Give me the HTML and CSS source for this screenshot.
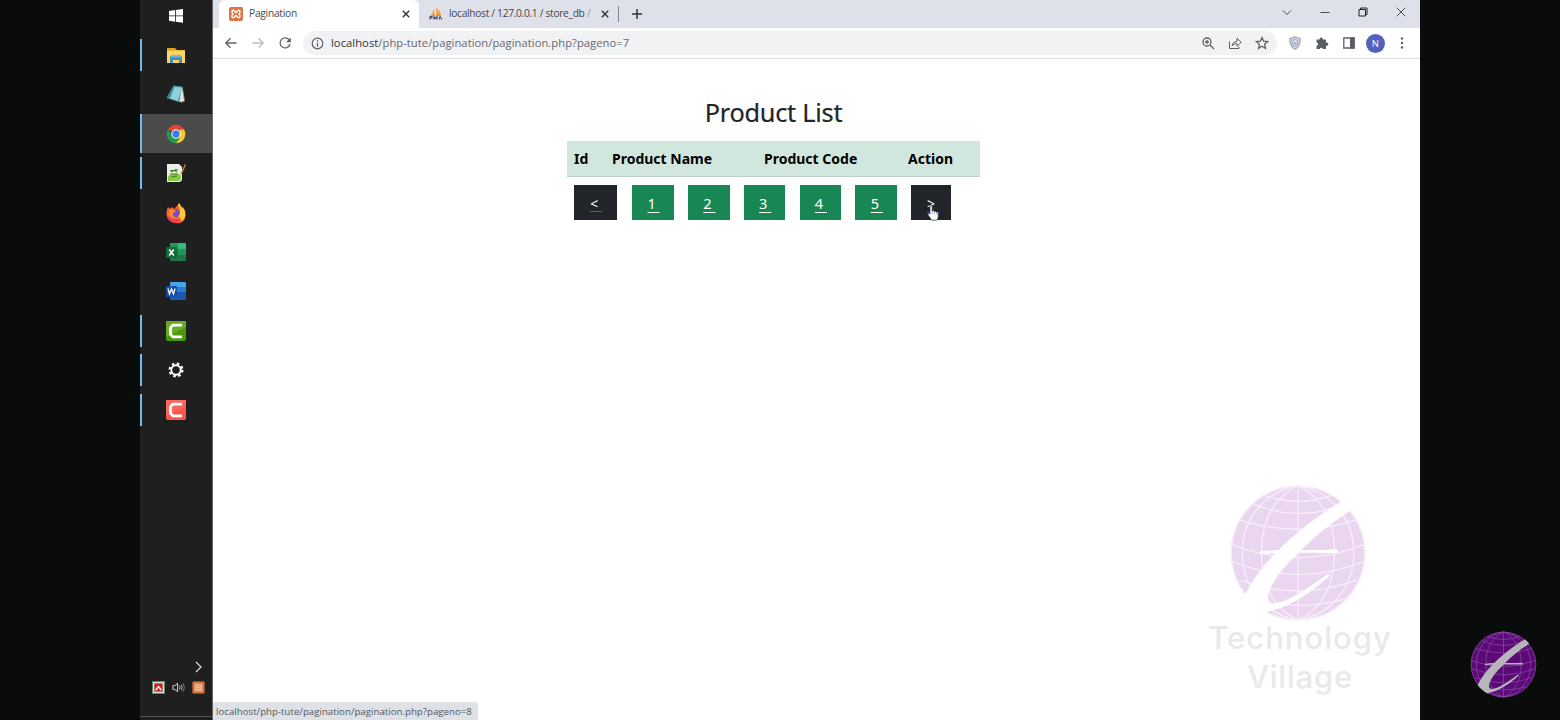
FILE: index.html
```html
<!DOCTYPE html>
<html lang="en">
<head>
<meta charset="utf-8">
<title>Pagination</title>
<link rel="stylesheet" href="styles.css">
</head>
<body>
<svg class="defs" aria-hidden="true">
  <clipPath id="disc"><circle cx="308" cy="234" r="206"/></clipPath>
  <symbol id="globe" viewBox="100 26 416 416">
    <circle class="ball" cx="308" cy="234" r="203"/>
    <g class="grid">
      <path d="M308 31V437M308 31C230 70 198 140 198 234S230 398 308 437M308 31C386 70 418 140 418 234S386 398 308 437M308 31C190 55 140 145 140 234S190 413 308 437M308 31C426 55 476 145 476 234S426 413 308 437"/>
      <path d="M205 60Q308 96 410 60M132 135Q308 190 484 135M107 208Q308 288 509 208M112 260Q308 338 505 260M130 315Q308 382 486 315M165 372Q308 412 451 372M170 85Q308 145 446 85"/>
      <circle cx="308" cy="234" r="201"/>
    </g>
    <g class="mark" clip-path="url(#disc)">
      <path d="M440 78C330 145 205 245 150 357L120 400L213 445V411C278 400 342 358 403 303Q407 297 398 297C350 330 292 374 245 385Q211 393 220 352C235 314 265 274 308 236C350 190 405 145 468 105L475 60Z"/>
      <path d="M196 229C260 222 350 228 425 223Q433 229 425 234C350 234 260 231 196 238Q190 233 196 229Z"/>
    </g>
  </symbol>
  <symbol id="xampp" viewBox="0 0 14 14">
    <rect width="14" height="14" rx="2" fill="#dc7540"/>
    <path d="M4.800 3.400C2.600 2.800 2.400 5.800 4 7C2.400 8.200 2.600 11.200 4.800 10.600C6.200 10.200 5.800 8.400 7 8.400S7.800 10.200 9.200 10.600C11.400 11.200 11.600 8.200 10 7C11.600 5.800 11.400 2.800 9.200 3.400C7.800 3.800 8.200 5.600 7 5.600S6.200 3.800 4.800 3.400Z" fill="none" stroke="#fff" stroke-width="1.400"/>
  </symbol>
</svg>
<div class="desktop">
  <nav class="taskbar">
    <div class="apps">
      <div class="app"><svg viewBox="0 0 22 22"><path fill="#fff" d="M4 6l6-.9v5.4H4zM10.800 5l7.200-1v6.500h-7.200zM4 11.300h6v5.400l-6-.9zM10.800 11.300H18v6.500l-7.200-1z"/></svg></div>
      <div class="app open"><svg viewBox="0 0 22 22"><path fill="#dda01c" d="M2 4h8l2 2h8v5H2z"/><path fill="#fcd462" d="M2 6.500h18V19H2z"/><path fill="#4090bb" d="M5 19v-5.500q0-2 2-2h8q2 0 2 2V19h-3v-3H8v3z"/><path fill="#69b4d4" d="M6 12h10v1.500H6z"/></svg></div>
      <div class="app"><svg viewBox="0 0 22 22"><path fill="#a6895c" d="M17.500 3l2.500 15-4 2z"/><path fill="#438f9f" d="M8.500 2.500l9 1-4 15.500L1.500 15z"/><path fill="#8fd0da" d="M9.500 4l7.500.5-4 13.500-8-2.500z"/><path fill="#d5edef" d="M17 4l2 14-5 1z"/></svg></div>
      <div class="app open active"><svg viewBox="0 0 22 22"><path fill="#e54435" d="M11 11L3 6.300A9.300 9.300 0 0 1 19.100 6.400H11z"/><path fill="#fbc832" d="M19.100 6.400A9.300 9.300 0 0 1 11 20.300L15 13.300 14.500 6.400z"/><path fill="#279b4c" d="M11 20.300A9.300 9.300 0 0 1 3 6.300L7 13.300l4 2h3.800z"/><circle cx="11" cy="11" r="4.700" fill="#fff"/><circle cx="11" cy="11" r="3.700" fill="#397de8"/></svg></div>
      <div class="app open"><svg viewBox="0 0 22 22"><path fill="#edf0e7" d="M2 2h12l3 3v13l-2 2H2z"/><path fill="#8bcb41" d="M3 14q6-4 13-1v4l-2 2H3z"/><path d="M5 8.500h3m2-1 3 .5M5 12h8m-7 3 6-1M6 10q3-3 6 0" stroke="#3d7e28" stroke-width="1.200" fill="none"/><path d="M20.500 2.500L16 12" stroke="#c78a2c" stroke-width="1.500"/></svg></div>
      <div class="app"><svg viewBox="0 0 22 22"><path fill="#ff642f" d="M3 5l2 2 2-2 2 2 4-4 1-2 3 5 3 2q2 9-3 12T5 19Q-1 14 3 5z"/><path fill="#ffc936" d="M13 3l1-2 3 5 1-1q5 9-1 14l-4-6q4-5 0-10z"/><path fill="#f53a57" d="M2 11q2 7 9 6l5 1q-5 5-11 1-4-3-3-8z"/><circle cx="10.500" cy="11" r="4.300" fill="#784dc4"/><path fill="#ff8a2a" d="M4 8q5-2 7 1l-3 2q-1 4 3 4-5 2-7-2z"/></svg></div>
      <div class="app"><svg viewBox="0 0 22 22"><rect x="5" y="2" width="16" height="18" rx="1" fill="#20764a"/><path fill="#34bd79" d="M13 2h7l1 1v5h-8z"/><path fill="#23945a" d="M5 2h8v6H5zM13 8h8v6h-8z"/><rect x="1" y="6" width="11" height="11" rx="1" fill="#14693d"/><path d="M4.200 8.500l4.600 6M8.800 8.500l-4.600 6" stroke="#fff" stroke-width="1.600"/></svg></div>
      <div class="app"><svg viewBox="0 0 22 22"><rect x="5" y="2" width="16" height="18" rx="1" fill="#1e57b0"/><path fill="#45a5eb" d="M6 2h14l1 1v4H5V3z"/><path fill="#2b7dd4" d="M5 7h16v5H5z"/><rect x="1" y="6" width="11" height="11" rx="1" fill="#1c4ca1"/><path d="M3 8.500l1.500 5.500 2-5 2 5L10 8.500" fill="none" stroke="#fff" stroke-width="1.300"/></svg></div>
      <div class="app open"><svg viewBox="0 0 22 22"><rect x="1" y="1" width="20" height="20" rx="2" fill="#4b980d"/><path fill="#65ac24" d="M1 1h20v6L1 17z"/><path d="M17 5.200H8L5.500 7.500v7L8 16.800h9" fill="none" stroke="#fff" stroke-width="2.800"/></svg></div>
      <div class="app open"><svg viewBox="0 0 22 22"><circle cx="11" cy="11" r="4.700" fill="none" stroke="#fff" stroke-width="1.900"/><circle cx="11" cy="11" r="6.300" fill="none" stroke="#fff" stroke-width="2.400" stroke-dasharray="2.500 2.448"/></svg></div>
      <div class="app open"><svg viewBox="0 0 22 22"><rect x="1" y="1" width="20" height="20" rx="2" fill="#f2594b"/><path fill="#f9695b" d="M1 1h20v6L1 17z"/><path d="M17 5.200H8L5.500 7.500v7L8 16.800h9" fill="none" stroke="#fff" stroke-width="2.800"/></svg></div>
    </div>
    <div class="tray">
      <svg class="more" viewBox="0 0 10 14"><path d="M2 2l5 5-5 5" fill="none" stroke="#ddd" stroke-width="1.200"/></svg>
      <div class="trayrow">
        <svg viewBox="0 0 14 14"><rect x=".5" y=".5" width="13" height="13" fill="#d9e4dc" stroke="#4b8b69"/><path fill="#c9222e" d="M2.500 2.500h9v9h-9z"/><path d="M4 10l3-4 3 4" stroke="#fff" stroke-width="1.500" fill="none"/></svg>
        <svg viewBox="0 0 14 14"><path d="M1 5h2l3-2.500v9L3 9H1z" fill="none" stroke="#ddd"/><path d="M8 5q1.400 2 0 4M10 4q2.200 3 0 6" stroke="#ccc" fill="none"/><path d="M12 2.500q3 4.500 0 9" stroke="#777" fill="none"/></svg>
        <svg viewBox="0 0 14 14"><rect x=".5" y=".5" width="13" height="13" rx="1" fill="#d7773f"/><rect x="3" y="3" width="8" height="8" fill="#edb48e"/><path d="M4.500 5.500h5M4.500 8.500h5" stroke="#e39a6c"/></svg>
      </div>
    </div>
  </nav>
  <main class="browser">
    <header class="tabs">
      <div class="tab current"><svg class="fav"><use href="#xampp"/></svg><span class="name">Pagination</span><svg class="close" viewBox="0 0 10 10"><path d="M1.800 1.800l6.400 6.400M8.200 1.800L1.800 8.200"/></svg></div>
      <div class="tab other"><svg class="fav" viewBox="0 0 14 14"><path fill="#f6a147" d="M1 9q3-3 4-7l1 7zM7 9q1-4 0-8 5 3 5 8z"/><path d="M1 12.500V9.500h2v1.500H1M5 12.500v-3l1.500 2L8 9.500v3M10 12.500l1-3 2 3" fill="none" stroke="#4b4764" stroke-width="1.100"/></svg><span class="name db">localhost / 127.0.0.1 / store_db <i>/</i></span><svg class="close" viewBox="0 0 10 10"><path d="M1.800 1.800l6.400 6.400M8.200 1.800L1.800 8.200"/></svg></div>
      <svg class="plus" viewBox="0 0 12 12"><path d="M6 1v10M1 6h10"/></svg>
      <div class="window">
        <svg viewBox="0 0 12 12"><path d="M2 4.500l4 4 4-4"/></svg>
        <svg viewBox="0 0 12 12"><path d="M1.500 6.500h9"/></svg>
        <svg viewBox="0 0 12 12"><path class="dark" d="M2 3.500h6.500V10H2zM3.500 3V2H10v6.500H9"/></svg>
        <svg viewBox="0 0 12 12"><path d="M1.700 1.700l8.600 8.600M10.300 1.700l-8.600 8.600"/></svg>
      </div>
    </header>
    <div class="toolbar">
      <div class="nav">
        <svg viewBox="0 0 14 14"><path d="M12.500 7H2M6.500 2.300L1.800 7l4.700 4.700"/></svg>
        <svg class="off" viewBox="0 0 14 14"><path d="M1.500 7H12M7.500 2.300L12.200 7l-4.700 4.700"/></svg>
        <svg viewBox="0 0 14 14"><path d="M11.500 4.500A5 5 0 1 0 12 8"/><path class="solid" d="M12.800 1.500v4.700H8.100z"/></svg>
      </div>
      <div class="omnibox">
        <svg class="info" viewBox="0 0 12 12"><circle cx="6" cy="6" r="4.900"/><path d="M6 5.400V9M6 3v1.300"/></svg>
        <span class="url"><b>localhost</b>/php-tute/pagination/pagination.php?pageno=7</span>
        <svg viewBox="0 0 14 14"><circle cx="6" cy="6" r="4"/><path d="M9 9l4 4M4 6h4M6 4v4"/></svg>
        <svg class="thin" viewBox="0 0 14 14"><path d="M1.500 5.500V12.500H11V10.500M4 9.700Q4.800 5.500 9 5.300V2.300L13.300 6.300 9 10.200V7.500Q6 7.500 4 9.700Z"/></svg>
        <svg viewBox="0 0 14 14"><path d="M7 1.500l1.600 3.700 4 .4-3 2.700.9 4L7 10.200l-3.500 2.100.9-4-3-2.700 4-.4z"/></svg>
      </div>
      <div class="ext">
        <svg viewBox="0 0 14 14"><path d="M7 .8l5.200 1.800q.5 7.400-5.200 10.800Q1.300 10 1.800 2.600z" fill="#d4d6df" stroke="#a9adba"/><circle cx="7" cy="6.600" r="2.900" fill="#eceef5" stroke="#a5adcc"/><path d="M5.500 6h3v2h-3z" fill="#a8afcb" stroke="none"/></svg>
        <svg viewBox="0 0 14 14"><path class="solid" d="M1.500 3.500h3.200a1.600 1.600 0 1 1 3.100 0H11v3.100a1.700 1.700 0 1 1 0 3.200V13H7.900a1.700 1.700 0 0 0-3.200 0H1.500V9.800a1.600 1.600 0 0 0 0-3.200z"/></svg>
        <svg viewBox="0 0 14 14"><path d="M1.800 2h10.400v10H1.800z"/><path class="solid" d="M8 1.500h4.500v11H8z"/></svg>
        <span class="avatar">N</span>
        <svg viewBox="0 0 14 14"><g class="solid"><circle cx="7" cy="2.500" r="1.200"/><circle cx="7" cy="7" r="1.200"/><circle cx="7" cy="11.500" r="1.200"/></g></svg>
      </div>
    </div>
    <section class="page">
      <h1>Product List</h1>
      <div class="table">
        <div class="thead"><span>Id</span><span>Product Name</span><span>Product Code</span><span>Action</span></div>
        <div class="pager">
          <a class="dark prev">&lt;&nbsp;</a><a>1&nbsp;</a><a>2&nbsp;</a><a>3&nbsp;</a><a>4&nbsp;</a><a>5&nbsp;</a><a class="dark next">&gt;&nbsp;</a>
        </div>
      </div>
    </section>
    <div class="status">localhost/php-tute/pagination/pagination.php?pageno=8</div>
    <svg class="cursor" viewBox="0 0 14 20"><path d="M4 11V3q1-2 2.200 0v5q1.500-1 2 .5 1.500-.8 2 .7 1.800-.6 2 1v3.500q0 2-1.500 3.500H5.500Q4.500 15 2 12q-.8-1.800 1-1.500z" fill="#fff" stroke="#333" stroke-width=".7"/><path d="M6.300 8v3M8.300 9v2.500M10.300 10v2" stroke="#777" stroke-width=".5"/></svg>
    <div class="watermark"><svg><use href="#globe"/></svg><span class="w1">Technology</span><span class="w2">Village</span></div>
  </main>
</div>
<svg class="badge"><use href="#globe"/></svg>
</body>
</html>
```
FILE: styles.css
```css
* { box-sizing: border-box; }
body { margin: 0; background: #090c0b; font-family: "Open Sans", "Noto Sans", sans-serif; overflow: hidden; }
svg { display: block; flex: none; }
.defs { position: absolute; width: 0; height: 0; }
.desktop { display: flex; width: 1280px; height: 720px; margin: 0 auto; }

.taskbar { width: 73px; background: #1f1f1f; border-right: 1px solid #666; border-bottom: 1px solid #1f1f1f; display: flex; flex-direction: column; justify-content: space-between; overflow: hidden; }
.apps { margin-top: -4.1px; }
.app { height: 39.4px; display: flex; align-items: center; justify-content: center; background: linear-gradient(#76b9ed, #76b9ed) no-repeat -2px 50% / 2px 32px; }
.app svg { width: 22px; height: 22px; }
.app.open { background-position: 0 50%; }
.app.active { background-color: #4b4b4b; background-size: 2px 100%; }
.tray { height: 60px; border-bottom: 1px solid #555; margin-bottom: 2px; }
.more { width: 10px; height: 14px; margin-left: 54px; margin-top: 3px; }
.trayrow { display: flex; gap: 7px; padding: 7px 0 0 12px; }
.trayrow svg { width: 13px; height: 13px; }

.browser { position: relative; width: 1207px; background: #fff; display: flex; flex-direction: column; }
.tabs { height: 28px; background: #dee1e9; display: flex; align-items: center; padding-left: 6px; }
.tab { height: 28px; display: flex; align-items: center; color: #45474b; padding-bottom: 1px; }
.current { width: 200px; background: #fff; border-radius: 6px 6px 0 0; padding-left: 10px; }
.other { width: 200px; padding-left: 10px; background: linear-gradient(#83868d, #83868d) no-repeat 199px 6px / 1px 16px; }
.fav { width: 14px; height: 14px; margin-right: 6px; }
.name { flex: 1; white-space: nowrap; letter-spacing: -.25px; font-size: 10.2px; line-height: 14px; padding-bottom: 1px; }
.name.db { letter-spacing: -.3px; }
.name i { font-style: normal; color: #999ca3; }
.close { width: 10px; height: 10px; margin-right: 8px; stroke: #333; stroke-width: 1.4; }
.other .close { margin-right: 9px; }
.plus { width: 12px; height: 12px; margin-left: 12px; stroke: #333; stroke-width: 1.5; }
.window { margin-left: auto; display: flex; gap: 26px; padding: 0 13px 4px 0; }
.window svg { width: 12px; height: 12px; fill: none; stroke: #494b50; stroke-width: 1; }
.window .dark { stroke: #202124; }

.toolbar { height: 31px; border-bottom: 1px solid #dcdde0; display: flex; align-items: center; padding-left: 11px; }
.toolbar svg { width: 14px; height: 14px; fill: none; stroke: #5f6368; stroke-width: 1.3; }
.toolbar .thin { stroke-width: 1; }
.toolbar .solid { fill: #5a5e63; stroke: none; }
.nav { display: flex; gap: 13px; width: 79px; }
.toolbar .off { stroke: #b9bbbe; }
.omnibox { width: 974px; height: 24px; border-radius: 12px; background: #f1f2f4; display: flex; align-items: center; gap: 13px; padding: 0 8px; }
.toolbar .info { width: 13px; height: 13px; stroke-width: 1.1; margin-right: -6px; }
.url { flex: 1; font-size: 11.2px; line-height: 16px; padding-bottom: 1px; color: #66696e; letter-spacing: .05px; white-space: nowrap; }
.url b { font-weight: 400; color: #333; }
.ext { display: flex; align-items: center; gap: 12.8px; padding-left: 11px; }
.avatar { width: 19px; height: 19px; margin: 0 -2.5px; border-radius: 50%; background: #5361b8; color: #fff; font-size: 9.5px; line-height: 19px; text-align: center; }

.page { width: 413px; margin: 38px 0 0 354px; }
h1 { margin: 0; height: 44px; font: 400 25.3px/30px "Noto Sans", sans-serif; letter-spacing: -.25px; color: #212529; -webkit-text-stroke: .2px #212529; text-align: center; white-space: nowrap; }
.thead { height: 36px; background: #d1e7dd; border-bottom: 1px solid #bcd0c7; display: grid; grid-template-columns: 38px 152px 144px auto; align-items: center; padding-left: 7px; font: 700 14px/20px "Noto Sans", sans-serif; color: #000; white-space: nowrap; }
.pager { display: grid; grid-template-columns: 44px repeat(5, 41.5px) 40px; column-gap: 14.3px; padding: 8px 0 0 7px; }
.pager a { height: 35px; padding-left: 1px; background: #198754; color: #fff; font: 14.6px/36px "Noto Sans", sans-serif; text-align: center; text-decoration: underline; text-underline-offset: 3px; text-decoration-thickness: 1px; }
.pager .dark { background: #212529; text-decoration-color: #1d6be0; font-size: 14px; line-height: 38px; }
.pager .prev { width: 43px; text-decoration-thickness: 1px; text-underline-offset: 2px; }
.pager .next { padding-left: 3px; }
.cursor { position: absolute; left: 713px; top: 203px; width: 14px; height: 20px; }
.status { position: absolute; left: 0; bottom: 0; width: 265px; height: 18px; background: #dee1e6; border-radius: 0 3px 0 0; padding-left: 3px; font-size: 9.7px; line-height: 19px; color: #55585d; white-space: nowrap; }

.watermark { position: absolute; left: 994px; top: 484px; width: 186px; color: #e9e9e9; font: 500 31px/39px Inter, sans-serif; text-align: center; display: flex; flex-direction: column; align-items: center; }
.watermark svg { width: 138px; height: 138px; margin: 0 0 -4px -4px; }
.watermark span { white-space: nowrap; }
.w1 { letter-spacing: 1px; }
.w2 { letter-spacing: .8px; }
.ball { fill: var(--ball, #ead6ef); }
.grid { fill: none; stroke: var(--grid, #f8edfa); stroke-width: 4; }
.mark { fill: var(--mark, #fff); }
.badge { position: absolute; left: 1469.500px; top: 630.500px; width: 67px; height: 67px; --ball: #5b0a78; --grid: #8f50a6; --mark: #b9b6ba; }
```
